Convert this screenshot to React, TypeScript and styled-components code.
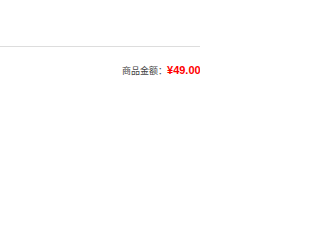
import React from "react";
import styled, { createGlobalStyle } from "styled-components";

const Global = createGlobalStyle`
  html, body { margin: 0; padding: 0; background: #fff; }
  body { font-family: "Liberation Sans", "Noto Sans CJK SC", sans-serif; }
`;

const Page = styled.div`
  width: 200px;
  height: 200px;
  overflow: hidden;
  padding-top: 46px;
  box-sizing: border-box;
`;

const Divider = styled.div`
  height: 1px;
  background: #dddddd;
`;

const SummaryRow = styled.div`
  display: flex;
  align-items: baseline;
  padding: 17px 0 0 122px;
  white-space: nowrap;
`;

const Label = styled.span`
  font-family: "Noto Sans CJK SC", sans-serif;
  font-size: 9px;
  color: #444;
`;

const Amount = styled.span`
  font-family: "Liberation Sans", Arial, sans-serif;
  font-size: 11px;
  font-weight: bold;
  color: #ff0000;
`;

export default function App() {
  return (
    <>
      <Global />
      <Page>
        <Divider />
        <SummaryRow>
          <Label>商品金额：</Label>
          <Amount>¥49.00</Amount>
        </SummaryRow>
      </Page>
    </>
  );
}
